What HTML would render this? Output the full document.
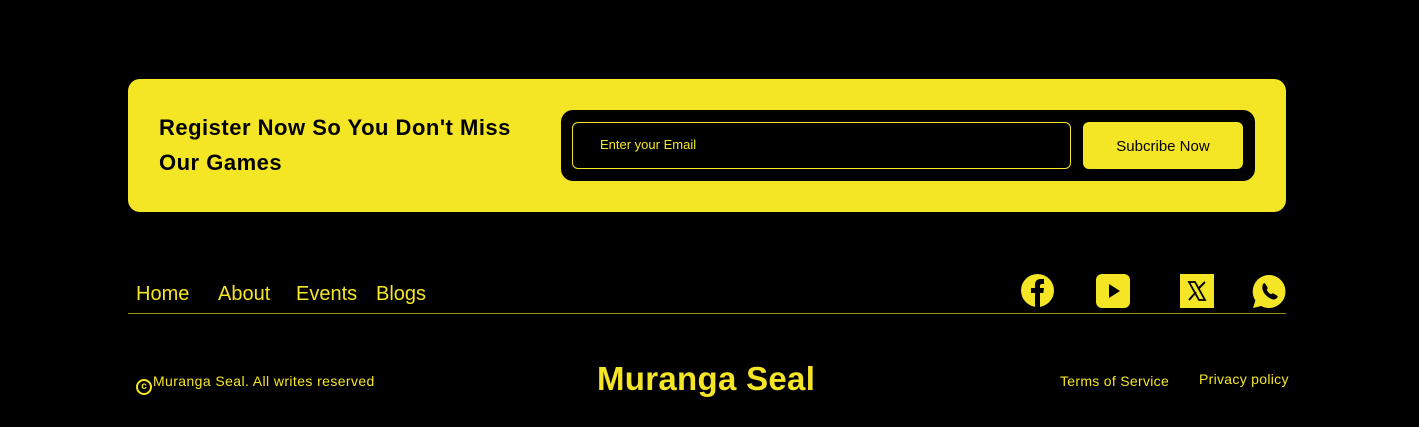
<!DOCTYPE html>
<html><head><meta charset="utf-8"><style>
*{margin:0;padding:0;box-sizing:border-box}
body{width:1419px;height:427px;background:#000;position:relative;overflow:hidden;font-family:"Liberation Sans",sans-serif;color:#f5e625}
.a{position:absolute}
.card{left:128px;top:79px;width:1158px;height:133px;background:#f5e625;border-radius:12px}
.h{left:159px;top:110px;font-size:22px;font-weight:bold;color:#000;line-height:35px;letter-spacing:0.5px}
.form{left:561px;top:110px;width:694px;height:71px;background:#000;border-radius:12px}
.inp{left:572px;top:122px;width:499px;height:47px;border:1px solid #f5e625;border-radius:6px;font-size:13px;padding:14px 0 0 27px}
.btn{left:1083px;top:122px;width:160px;height:47px;background:#f5e625;border-radius:6px;color:#000;font-size:15px;text-align:center;line-height:49px}
.nav{top:283px;font-size:20px}
.line{left:128px;top:313px;width:1158px;height:1px;background:#9a8e16}
.sm{font-size:14px}
</style></head><body>
<div class="a card"></div>
<div class="a h">Register Now So You Don't Miss<br>Our Games</div>
<div class="a form"></div>
<div class="a inp">Enter your Email</div>
<div class="a btn">Subcribe Now</div>
<div class="a nav" style="left:136px">Home</div>
<div class="a nav" style="left:218px">About</div>
<div class="a nav" style="left:296px">Events</div>
<div class="a nav" style="left:376px">Blogs</div>
<svg class="a" style="left:1021px;top:274px" width="33" height="34" viewBox="0 0 33 34"><circle cx="16.5" cy="16.5" r="16.5" fill="#f5e625"/><path d="M14 34V19h-4v-5h4v-3c0-4 2-6 6-6h3v5h-2c-1.5 0-2 .7-2 2v2h4l-.7 5H19v15z" fill="#000"/></svg>
<svg class="a" style="left:1096px;top:274px" width="34" height="34" viewBox="0 0 34 34"><rect width="34" height="34" rx="6" fill="#f5e625"/><path d="M13 10v14l11-7z" fill="#000"/></svg>
<svg class="a" style="left:1180px;top:274px" width="34" height="34" viewBox="0 0 34 34"><rect width="34" height="34" fill="#f5e625"/><path d="M9 8h6l10 18h-6z" fill="none" stroke="#000" stroke-width="1.8"/><path d="M9 26L16 18M18 15L25 8" stroke="#000" stroke-width="2"/></svg>
<svg class="a" style="left:1251px;top:274px" width="36" height="36" viewBox="0 0 36 36"><path d="M18 1a16.5 16.5 0 0 1 0 33c-3 0-5.5-.8-7.8-2L2 34l2.4-7.5A16.5 16.5 0 0 1 18 1z" fill="#f5e625"/><path d="M12 10c1-1 2-1 2.5 0l2 3.5c.4.8 0 1.5-.8 2.2.8 2 2.5 3.6 4.5 4.6.7-.8 1.4-1.2 2.2-.8l3.5 2c1 .5 1 1.5 0 2.5-1.5 1.5-3.5 2-6 .8-3.5-1.6-6.5-4.6-8-8-1-2.5-.5-5 .1-6.8z" fill="#000"/></svg>
<div class="a line"></div>
<div class="a sm" style="left:136px;top:373px;letter-spacing:0.4px"><span style="display:inline-block;width:16px;height:16px;border:2px solid #f5e625;border-radius:50%;font-size:10px;font-weight:bold;text-align:center;line-height:12px;vertical-align:-3px;letter-spacing:0;margin-right:1px">c</span>Muranga Seal. All writes reserved</div>
<div class="a" style="left:597px;top:360px;font-size:33px;font-weight:bold;letter-spacing:0.3px">Muranga Seal</div>
<div class="a sm" style="left:1060px;top:373px;letter-spacing:0.3px">Terms of Service</div>
<div class="a sm" style="left:1199px;top:371px;letter-spacing:0.3px">Privacy policy</div>
</body></html>
